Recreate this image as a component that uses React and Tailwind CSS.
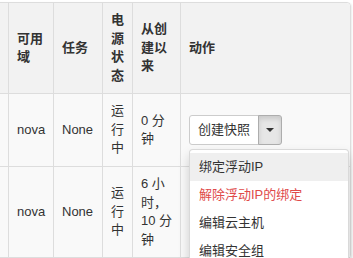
import { useState } from "react";

const rows = [
  { zone: "nova", task: "None", power: "运行中", age: "0 分钟", menu: true },
  { zone: "nova", task: "None", power: "运行中", age: "6 小时，10 分钟" },
];

const actions = [
  { label: "绑定浮动IP", active: true },
  { label: "解除浮动IP的绑定", danger: true },
  { label: "编辑云主机" },
  { label: "编辑安全组" },
  { label: "控制台" },
];

const cell = "flex items-center border-r border-b border-[#dddddd] py-2 pl-2 pr-2";

const App = () => {
  const [open] = useState(true);

  return (
    <div
      className="w-[353px] h-[258px] overflow-hidden bg-white text-[13px] leading-[1.42857] text-[#333333]"
      style={{ fontFamily: '"Liberation Sans", "Noto Sans CJK SC", sans-serif' }}
    >
      <div className="mt-[2px] ml-[-53px] w-[404px] border border-[#dddddd] rounded-[4px] shadow-[1px_1px_2px_rgba(0,0,0,0.08)]">
        <div className="grid grid-cols-[61px_45px_49px_30px_48px_169px]">
          {/* header */}
          <div className={`${cell} bg-[#f2f2f2] rounded-tl-[4px]`}></div>
          <div className={`${cell} bg-[#f2f2f2] font-bold`}>可用域</div>
          <div className={`${cell} bg-[#f2f2f2] font-bold`}>任务</div>
          <div className={`${cell} bg-[#f2f2f2] font-bold`}>电源状态</div>
          <div className={`${cell} bg-[#f2f2f2] font-bold pr-[6px]`}>从创建以来</div>
          <div className="flex items-center border-b border-[#dddddd] bg-[#f2f2f2] font-bold p-2 rounded-tr-[4px]">
            动作
          </div>

          {rows.map((r, i) => {
            const bg = "bg-[#f9f9f9]";
            return [
              <div key={`a${i}`} className={`${cell} ${bg}`}></div>,
              <div key={`b${i}`} className={`${cell} ${bg}`}>{r.zone}</div>,
              <div key={`c${i}`} className={`${cell} ${bg}`}>{r.task}</div>,
              <div key={`d${i}`} className={`${cell} ${bg}`}>{r.power}</div>,
              <div key={`e${i}`} className={`${cell} ${bg} pr-[6px]`}>{r.age}</div>,
              <div key={`f${i}`} className={`flex items-center border-b border-[#dddddd] p-2 ${bg}`}>
                {r.menu && (
                  <div className="relative flex">
                    <button className="w-[70px] h-[30px] bg-white border border-[#cccccc] rounded-l-[3px] text-[#333333] text-[13px]">
                      创建快照
                    </button>
                    <button className="w-[24px] h-[30px] -ml-px bg-[#e6e6e6] border border-[#adadad] rounded-r-[3px] flex items-center justify-center shadow-[inset_0_3px_5px_rgba(0,0,0,0.125)]">
                      <span className="w-0 h-0 border-l-[4px] border-r-[4px] border-t-[4px] border-l-transparent border-r-transparent border-t-[#333333]"></span>
                    </button>
                    {open && (
                      <div className="absolute left-0 top-[34px] z-10 w-[160px] bg-white border border-[rgba(0,0,0,0.15)] rounded-[4px] shadow-[0_6px_12px_rgba(0,0,0,0.175)] py-[3px]">
                        {actions.map((a) => (
                          <div
                            key={a.label}
                            className={`h-[28px] flex items-center pl-[9px] whitespace-nowrap ${
                              a.active ? "bg-[#efefef]" : ""
                            } ${a.danger ? "text-[#e04a4a]" : "text-[#333333]"}`}
                          >
                            {a.label}
                          </div>
                        ))}
                      </div>
                    )}
                  </div>
                )}
              </div>,
            ];
          })}
        </div>
      </div>
    </div>
  );
};

export default App;
